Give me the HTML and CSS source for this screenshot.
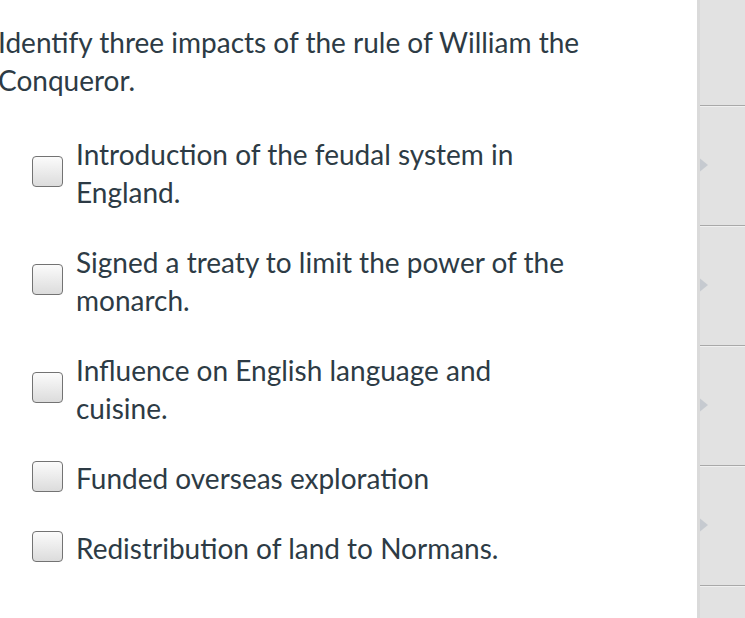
FILE: index.html
```html
<!DOCTYPE html>
<html lang="en">
<head>
  <meta charset="UTF-8" />
  <meta name="viewport" content="width=device-width, initial-scale=1" />
  <title>Quiz Question</title>
  <link rel="stylesheet" href="styles.css">
</head>
<body>
  <div class="page">
    <div class="question">
      <p class="prompt">Identify three impacts of the rule of William the Conqueror.</p>

      <div class="answers">
        <label class="answer">
          <span class="box"></span>
          <span class="answer-text">Introduction of the feudal system in England.</span>
        </label>
        <label class="answer">
          <span class="box"></span>
          <span class="answer-text">Signed a treaty to limit the power of the monarch.</span>
        </label>
        <label class="answer">
          <span class="box"></span>
          <span class="answer-text">Influence on English language and cuisine.</span>
        </label>
        <label class="answer">
          <span class="box"></span>
          <span class="answer-text">Funded overseas exploration</span>
        </label>
        <label class="answer">
          <span class="box"></span>
          <span class="answer-text">Redistribution of land to Normans.</span>
        </label>
      </div>
    </div>

    <div class="sidebar">
      <div class="slot first"></div>
      <div class="slot"><span class="arrow"></span></div>
      <div class="slot"><span class="arrow"></span></div>
      <div class="slot"><span class="arrow"></span></div>
      <div class="slot"><span class="arrow"></span></div>
      <div class="slot"></div>
    </div>
  </div>
</body>
</html>
```

FILE: styles.css
```css
body {
  margin: 0;
  font-family: Lato, 'Open Sans', sans-serif;
  color: #2d3b45;
  background: #fff;
  overflow: hidden;
}
.page {
  display: flex;
  height: 618px;
  overflow: hidden;
}
.question {
  flex: 1;
  padding-top: 23px;
}
.prompt {
  margin: 0 0 0 -2px;
  font-size: 28px;
  line-height: 38px;
  width: 620px;
}
.answers {
  display: flex;
  flex-direction: column;
  gap: 32px;
  margin-top: 36px;
  padding-left: 32px;
}
.answer {
  display: flex;
  align-items: center;
  gap: 13px;
  font-size: 28px;
  line-height: 38px;
}
.answer-text {
  width: 510px;
}
.box {
  flex: none;
  width: 29px;
  height: 29px;
  border: 1.5px solid #737373;
  border-radius: 4px;
  background: linear-gradient(#fbfbfb, #dcdcdc);
  margin-top: -4px;
}
.sidebar {
  width: 48px;
  flex: none;
  background: #e2e2e2;
  border-left: 3px solid #dadada;
  box-sizing: border-box;
  overflow: hidden;
}
.slot {
  height: 119px;
  border-bottom: 1px solid #a9a9a9;
  box-shadow: 0 1px 0 #f0f0f0;
  display: flex;
  align-items: center;
}
.slot.first {
  height: 105px;
}
.arrow {
  width: 0;
  height: 0;
  border-top: 9px solid transparent;
  border-bottom: 9px solid transparent;
  border-left: 11px solid #c6cad0;
  margin-left: -3px;
  margin-top: -2px;
}
```
